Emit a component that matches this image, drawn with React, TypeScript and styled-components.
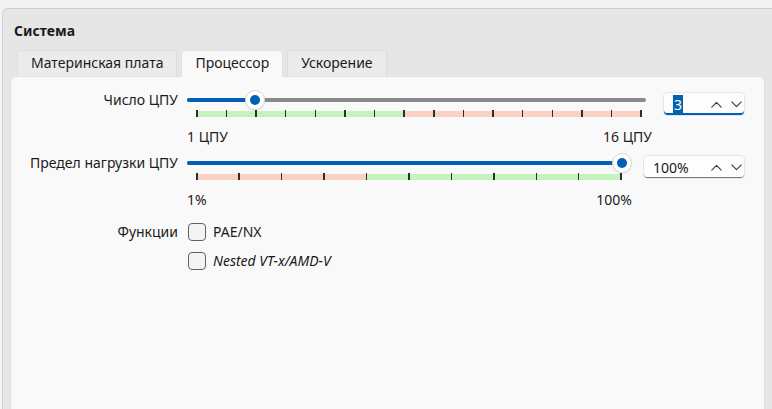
import React from "react";
import styled, { createGlobalStyle } from "styled-components";

const Global = createGlobalStyle`
  html, body { margin: 0; padding: 0; }
  body {
    background: #f3f3f3;
    font-family: "Noto Sans", "Open Sans", sans-serif;
    font-size: 14px;
    color: #1b1b1b;
  }
  * { box-sizing: border-box; }
`;

const ACCENT = "#005fb8";
const GREEN = "#c4f3be";
const SALMON = "#fbd2c1";

const Page = styled.div`
  height: 409px;
  overflow: hidden;
  padding: 8px 0 0 2px;
  display: flex;
`;

const Group = styled.section`
  flex: 1;
  display: flex;
  flex-direction: column;
  background: #e6e6e6;
  border-top: 1px solid #cbcbcb;
  border-left: 1px solid #d3d3d3;
  border-top-left-radius: 6px;
  padding: 0 7px;
`;

const Title = styled.h2`
  margin: 13px 0 0 4px;
  font-size: 14px;
  font-weight: 700;
  line-height: 18px;
`;

const TabBar = styled.div`
  display: flex;
  align-items: flex-end;
  gap: 4px;
  margin: 10px 0 0 7px;
`;

const Tab = styled.div<{ $active?: boolean }>`
  position: relative;
  z-index: ${(p) => (p.$active ? 1 : 0)};
  height: ${(p) => (p.$active ? 27 : 26)}px;
  margin-bottom: ${(p) => (p.$active ? -1 : 0)}px;
  padding: 0 13px;
  line-height: 24px;
  background: ${(p) => (p.$active ? "#f9f9f9" : "#ebebeb")};
  border: 1px solid ${(p) => (p.$active ? "#e2e2e2" : "#dddddd")};
  border-bottom: none;
  border-radius: 4px 4px 0 0;
  white-space: nowrap;
`;

const Content = styled.div`
  flex: 1;
  background: #f9f9f9;
  border: 1px solid #e1e1e1;
  border-bottom: none;
  border-radius: 6px 6px 0 0;
  padding-top: 13px;
`;

const Row = styled.div<{ $gapAfter?: number }>`
  display: flex;
  align-items: flex-start;
  margin-bottom: ${(p) => p.$gapAfter ?? 0}px;
`;

const Label = styled.div<{ $lh?: number }>`
  width: 167px;
  flex-shrink: 0;
  text-align: right;
  line-height: ${(p) => p.$lh ?? 20}px;
  white-space: nowrap;
`;

const SliderBox = styled.div`
  flex: 1;
  margin-left: 9px;
  display: flex;
  flex-direction: column;
`;

const TrackArea = styled.div`
  height: 20px;
  margin-right: 6px;
  display: flex;
  align-items: center;
`;

const Track = styled.div`
  position: relative;
  width: 100%;
  height: 4px;
  border-radius: 2px;
  background: #8a8a8a;
`;

const Fill = styled.div`
  position: absolute;
  left: 0;
  top: 0;
  bottom: 0;
  border-radius: 2px;
  background: ${ACCENT};
`;

const Thumb = styled.div`
  position: absolute;
  top: 50%;
  width: 20px;
  height: 20px;
  border-radius: 50%;
  background: #ffffff;
  border: 1px solid #d9d9d9;
  box-shadow: 0 1px 2px rgba(0, 0, 0, 0.08);
  transform: translate(-50%, -50%);
  display: flex;
  align-items: center;
  justify-content: center;
  &::after {
    content: "";
    width: 10px;
    height: 10px;
    border-radius: 50%;
    background: ${ACCENT};
  }
`;

const TickStrip = styled.div<{ $split: number; $left: string; $right: string }>`
  height: 7px;
  margin: 0 10px 0 9px;
  display: flex;
  justify-content: space-between;
  background: linear-gradient(
      to right,
      ${(p) => p.$left} 0 ${(p) => p.$split}%,
      ${(p) => p.$right} ${(p) => p.$split}% 100%
    )
    0 1px / 100% 6px no-repeat;
`;

const Tick = styled.span`
  width: 1.5px;
  height: 7px;
  background: #2e2e2e;
`;

const EndLabels = styled.div`
  display: flex;
  justify-content: space-between;
  margin-top: 10px;
  line-height: 20px;
`;

const Spin = styled.div<{ $w: number; $focused?: boolean }>`
  width: ${(p) => p.$w}px;
  height: 24px;
  margin: 2px 19px 0 11px;
  flex-shrink: 0;
  display: flex;
  align-items: center;
  padding-left: 9px;
  background: #fdfdfd;
  border: 1px solid #e6e6e6;
  border-radius: 4px;
  box-shadow: inset 0 ${(p) => (p.$focused ? -2 : -1)}px 0
    ${(p) => (p.$focused ? ACCENT : "#7a7a7a")};
`;

const SpinText = styled.span`
  flex: 1;
  line-height: 19px;
`;

const Selected = styled.span`
  background: #0063b1;
  color: #fff;
  padding: 0 1px;
  display: inline-block;
  line-height: 19px;
`;

const SpinButtons = styled.div`
  display: flex;
  gap: 6px;
  margin-right: 1px;
`;

const SpinButton = styled.span`
  width: 14px;
  height: 16px;
  display: flex;
  align-items: center;
  justify-content: center;
  color: #3a3a3a;
`;

const Checks = styled.div`
  display: flex;
  flex-direction: column;
  margin-left: 10px;
`;

const CheckItem = styled.label`
  height: 29px;
  display: flex;
  align-items: center;
  gap: 7px;
`;

const Box = styled.span`
  width: 18px;
  height: 18px;
  border: 1px solid #626262;
  border-radius: 4px;
  background: #f4f4f4;
`;

const CheckText = styled.span<{ $italic?: boolean }>`
  font-style: ${(p) => (p.$italic ? "italic" : "normal")};
`;

const Chevron = ({ up }: { up?: boolean }) => (
  <svg width="11" height="7" viewBox="0 0 11 7" fill="none">
    <path
      d={up ? "M0.8 6.2 L5.5 1.3 L10.2 6.2" : "M0.8 0.8 L5.5 5.7 L10.2 0.8"}
      stroke="currentColor"
      strokeWidth="1.1"
      strokeLinecap="round"
      strokeLinejoin="round"
    />
  </svg>
);

type SliderProps = {
  ticks: number;
  value: number; // 0..1
  split: number; // percent
  left: string;
  right: string;
  min: string;
  max: string;
};

const Slider = ({ ticks, value, split, left, right, min, max }: SliderProps) => {
  const pos = `calc(9px + (100% - 13px) * ${value})`;
  return (
    <SliderBox>
      <TrackArea>
        <Track>
          <Fill style={{ width: pos }} />
          <Thumb style={{ left: pos }} />
        </Track>
      </TrackArea>
      <TickStrip $split={split} $left={left} $right={right}>
        {Array.from({ length: ticks }).map((_, i) => (
          <Tick key={i} />
        ))}
      </TickStrip>
      <EndLabels>
        <span>{min}</span>
        <span>{max}</span>
      </EndLabels>
    </SliderBox>
  );
};

export default function App() {
  return (
    <>
      <Global />
      <Page>
        <Group>
          <Title>Система</Title>
          <TabBar>
            <Tab>Материнская плата</Tab>
            <Tab $active>Процессор</Tab>
            <Tab>Ускорение</Tab>
          </TabBar>
          <Content>
            <Row $gapAfter={6}>
              <Label>Число ЦПУ</Label>
              <Slider
                ticks={16}
                value={2 / 15}
                split={(7 / 15) * 100}
                left={GREEN}
                right={SALMON}
                min="1 ЦПУ"
                max="16 ЦПУ"
              />
              <Spin $w={82} $focused>
                <SpinText>
                  <Selected>3</Selected>
                </SpinText>
                <SpinButtons>
                  <SpinButton>
                    <Chevron up />
                  </SpinButton>
                  <SpinButton>
                    <Chevron />
                  </SpinButton>
                </SpinButtons>
              </Spin>
            </Row>
            <Row $gapAfter={7}>
              <Label>Предел нагрузки ЦПУ</Label>
              <Slider
                ticks={11}
                value={1}
                split={40}
                left={SALMON}
                right={GREEN}
                min="1%"
                max="100%"
              />
              <Spin $w={102}>
                <SpinText>100%</SpinText>
                <SpinButtons>
                  <SpinButton>
                    <Chevron up />
                  </SpinButton>
                  <SpinButton>
                    <Chevron />
                  </SpinButton>
                </SpinButtons>
              </Spin>
            </Row>
            <Row>
              <Label $lh={29}>Функции</Label>
              <Checks>
                <CheckItem>
                  <Box />
                  <CheckText>PAE/NX</CheckText>
                </CheckItem>
                <CheckItem>
                  <Box />
                  <CheckText $italic>Nested VT-x/AMD-V</CheckText>
                </CheckItem>
              </Checks>
            </Row>
          </Content>
        </Group>
      </Page>
    </>
  );
}
